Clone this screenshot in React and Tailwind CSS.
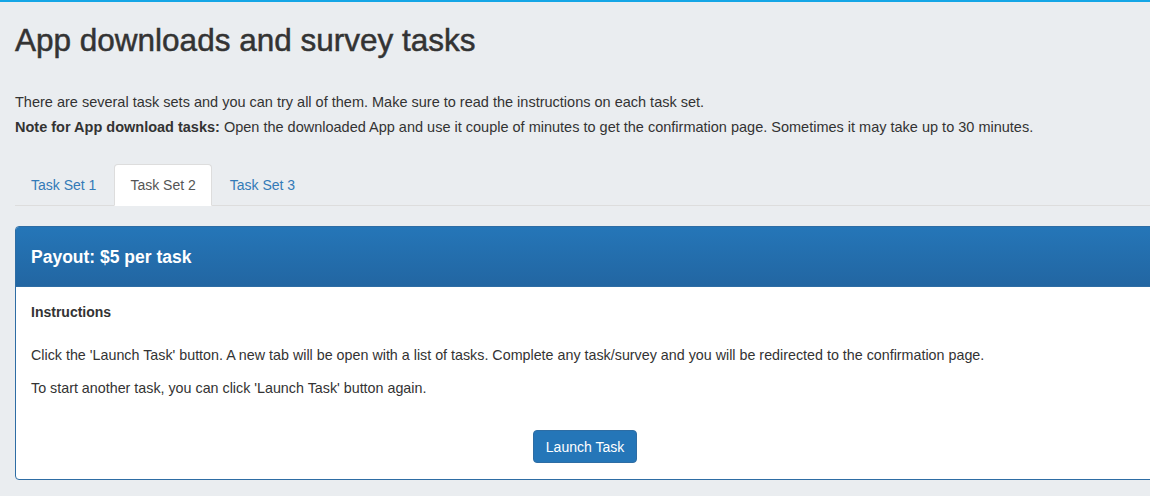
import React from 'react';

const tabs = ['Task Set 1', 'Task Set 2', 'Task Set 3'];

function App() {
  const active = 1;
  return (
    <div
      className="min-h-[496px] w-full overflow-hidden bg-[#eaedf0] border-t-2 border-[#14a6e6] text-[#333] text-[14px] leading-[20px]"
      style={{ fontFamily: '"Liberation Sans", Arial, Helvetica, sans-serif' }}
    >
      <div className="w-[1170px] pl-[15px]">
        <h1 className="text-[31.5px] leading-[33px] mt-[22px] text-[#333] [-webkit-text-stroke:0.5px_#333]">
          App downloads and survey tasks
        </h1>

        <p className="mt-[35px] text-[14.5px]">
          There are several task sets and you can try all of them. Make sure to read the instructions on each task set.
        </p>
        <p className="mt-[5px] text-[14.5px]">
          <b>Note for App download tasks:</b> Open the downloaded App and use it couple of minutes to get the confirmation page. Sometimes it may take up to 30 minutes.
        </p>

        <ul className="mt-[27px] flex border-b border-[#dddddd]">
          {tabs.map((t, i) => (
            <li key={t} className="mr-[2px] -mb-px">
              {i === active ? (
                <span className="block px-[15px] py-[10px] border border-[#dddddd] border-b-transparent rounded-t-[4px] bg-white text-[#555]">
                  {t}
                </span>
              ) : (
                <a href="#" className="block px-[15px] py-[10px] border border-transparent text-[#337ab7]">
                  {t}
                </a>
              )}
            </li>
          ))}
        </ul>

        <div className="mt-[20px] border border-[#2e6da4] rounded-[4px] bg-white overflow-hidden">
          <div className="h-[60px] px-[15px] flex items-center bg-gradient-to-b from-[#2576b8] to-[#2266a2] border-b border-[#2e6da4]">
            <h3 className="text-white font-bold text-[17.5px]">Payout: $5 per task</h3>
          </div>
          <div className="px-[15px] pt-[15px] pb-[16px]">
            <p className="font-bold">Instructions</p>
            <p className="mt-[23px] text-[14.3px]">
              Click the 'Launch Task' button. A new tab will be open with a list of tasks. Complete any task/survey and you will be redirected to the confirmation page.
            </p>
            <p className="mt-[13px] text-[14.3px]">
              To start another task, you can click 'Launch Task' button again.
            </p>
            <div className="w-[1140px] flex justify-center mt-[32px]">
              <button className="h-[33px] px-[12px] rounded-[4px] border border-[#2e6da4] bg-[#2576b8] text-white text-[14px] ml-[-32px]">
                Launch Task
              </button>
            </div>
          </div>
        </div>
      </div>
    </div>
  );
}

export default App;
